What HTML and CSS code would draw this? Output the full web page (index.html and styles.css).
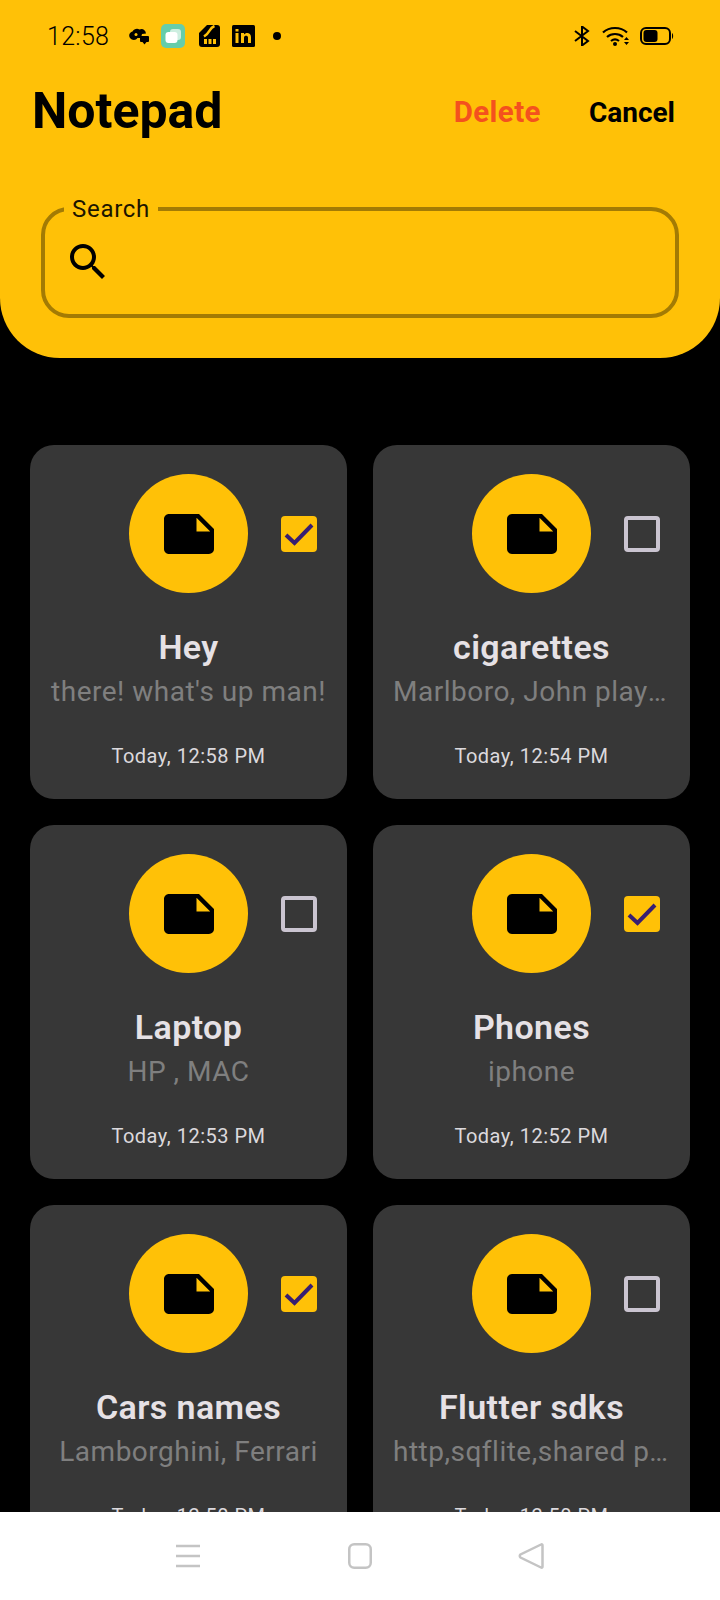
FILE: index.html
```html
<!DOCTYPE html>
<html lang="en">
<head>
    <meta charset="UTF-8">
    <title>Notepad</title>
    <link rel="stylesheet" href="styles.css">
</head>
<body>
<div class="screen">
    <header class="top">
        <div class="status">
            <span class="time">12:58</span>
            <svg class="ic-cloud" width="20" height="17" viewBox="0 0 20 17"><path d="M1 10C-1 7 1 4 3.500 3.500 5 1 8 0 10.500 1.500 13 0 16.500 1.500 17 5.500L13 6l-1 4H8.500C7 12.500 3 12.500 1 10z" fill="#000"/><rect x="11" y="8" width="9" height="6" rx="1" fill="#000"/><path d="M13.500 14h4l-2 2.500z" fill="#000"/><circle cx="7" cy="6.500" r="1.500" fill="#ffc107"/></svg>
            <svg class="ic-app" width="24" height="24" viewBox="0 0 24 24"><rect width="24" height="24" rx="5" fill="#66cdaa"/><rect x="9" y="5" width="11" height="11" rx="3" fill="#cdeee0"/><rect x="4.500" y="8" width="12" height="11" rx="3" fill="#fff"/></svg>
            <svg class="ic-sim" width="21" height="22" viewBox="0 0 21 22"><path d="M8 0h10a3 3 0 0 1 3 3v16a3 3 0 0 1-3 3H3a3 3 0 0 1-3-3V8z" fill="#000"/><path d="M15.500 1C10 3 11.500 7.500 5 11.500" fill="none" stroke="#ffc107" stroke-width="2.500"/><path d="M5 14h3v5H5zM9.500 14h3v5h-3zM14 14h3v5h-3z" fill="#ffc107"/></svg>
            <svg class="ic-in" width="23" height="22" viewBox="0 0 23 22"><rect width="23" height="22" rx="1.500" fill="#000"/><path d="M3.500 8h3v10h-3zM3.500 4h3v2.600h-3zM9 8h3v1.500c1.500-2.300 7-2.500 7 2.500v6h-3v-5.500c0-2.500-4-2.500-4 0V18H9z" fill="#ffc107"/></svg>
            <span class="dot"></span>
            <span class="spring"></span>
            <svg class="ic-bt" width="16" height="20" viewBox="0 0 16 20"><path d="M1 5l13 10-6 4.500V.5L14 5 1 15" fill="none" stroke="#000" stroke-width="2"/></svg>
            <svg class="ic-wifi" width="28" height="20" viewBox="0 0 28 20"><g fill="none" stroke="#000" stroke-width="2.200"><path d="M1 6.500c6.500-6 17.500-6 24 0"/><path d="M5 11c4.500-4 11.500-4 16 0"/><path d="M9 15c2.500-2 5.500-2 8 0"/></g><circle cx="13" cy="18" r="2" fill="#000"/><path d="M22 14l2.500-3 2.500 3zM22 16l2.500 3 2.500-3z" fill="#000"/></svg>
            <svg class="ic-batt" width="34" height="18" viewBox="0 0 34 18"><rect x="1" y="1" width="29" height="16" rx="5" fill="none" stroke="#000" stroke-width="2"/><rect x="3.500" y="3" width="14" height="12" rx="3" fill="#000"/><path d="M32 6c1.500 1 1.500 5 0 6z" fill="#000"/></svg>
        </div>
        <div class="bar">
            <h1 class="app-title">Notepad</h1>
            <span class="act delete">Delete</span>
            <span class="act cancel">Cancel</span>
        </div>
        <fieldset class="search">
            <legend>Search</legend>
            <svg width="48" height="48" viewBox="0 0 24 24"><path d="M15.500 14h-.79l-.28-.27C15.410 12.590 16 11.110 16 9.500 16 5.910 13.090 3 9.500 3S3 5.910 3 9.500 5.910 16 9.500 16c1.610 0 3.090-.59 4.230-1.570l.27.28v.79l5 4.990L20.490 19l-4.990-5zm-6 0C7.010 14 5 11.990 5 9.500S7.010 5 9.500 5 14 7.010 14 9.500 11.990 14 9.500 14z" fill="#000"/></svg>
        </fieldset>
    </header>

    <main class="notes">
        <div class="card">
            <div class="card-head">
                <div class="circle"><svg width="60" height="60" viewBox="0 0 24 24"><use href="#note"/></svg></div>
                <div class="check on"><svg width="36" height="36" viewBox="0 0 36 36"><path d="M5 19l8.500 8L31 9" fill="none" stroke="#381e72" stroke-width="4"/></svg></div>
            </div>
            <div class="name">Hey</div>
            <div class="desc">there! what's up man!</div>
            <div class="date">Today, 12:58 PM</div>
        </div>
        <div class="card">
            <div class="card-head">
                <div class="circle"><svg width="60" height="60" viewBox="0 0 24 24"><use href="#note"/></svg></div>
                <div class="check"></div>
            </div>
            <div class="name">cigarettes</div>
            <div class="desc">Marlboro, John player gold</div>
            <div class="date">Today, 12:54 PM</div>
        </div>
        <div class="card">
            <div class="card-head">
                <div class="circle"><svg width="60" height="60" viewBox="0 0 24 24"><use href="#note"/></svg></div>
                <div class="check"></div>
            </div>
            <div class="name">Laptop</div>
            <div class="desc">HP , MAC</div>
            <div class="date">Today, 12:53 PM</div>
        </div>
        <div class="card">
            <div class="card-head">
                <div class="circle"><svg width="60" height="60" viewBox="0 0 24 24"><use href="#note"/></svg></div>
                <div class="check on"><svg width="36" height="36" viewBox="0 0 36 36"><path d="M5 19l8.500 8L31 9" fill="none" stroke="#381e72" stroke-width="4"/></svg></div>
            </div>
            <div class="name">Phones</div>
            <div class="desc">iphone</div>
            <div class="date">Today, 12:52 PM</div>
        </div>
        <div class="card">
            <div class="card-head">
                <div class="circle"><svg width="60" height="60" viewBox="0 0 24 24"><use href="#note"/></svg></div>
                <div class="check on"><svg width="36" height="36" viewBox="0 0 36 36"><path d="M5 19l8.500 8L31 9" fill="none" stroke="#381e72" stroke-width="4"/></svg></div>
            </div>
            <div class="name">Cars names</div>
            <div class="desc">Lamborghini, Ferrari</div>
            <div class="date">Today, 12:50 PM</div>
        </div>
        <div class="card">
            <div class="card-head">
                <div class="circle"><svg width="60" height="60" viewBox="0 0 24 24"><use href="#note"/></svg></div>
                <div class="check"></div>
            </div>
            <div class="name">Flutter sdks</div>
            <div class="desc">http,sqflite,shared preferences</div>
            <div class="date">Today, 12:50 PM</div>
        </div>
    </main>

    <nav class="navbar">
        <svg width="26" height="24" viewBox="0 0 26 24"><path d="M1 2h24M1 12h24M1 22h24" stroke="#c4c4c4" stroke-width="2.500" fill="none"/></svg>
        <svg class="nav-home" width="24" height="26" viewBox="0 0 24 26"><rect x="1.250" y="1.250" width="21.500" height="23.500" rx="5" fill="none" stroke="#c4c4c4" stroke-width="2.500"/></svg>
        <svg class="nav-back" width="26" height="28" viewBox="0 0 26 28"><path d="M23 2.500c1 -.6 1.500 0 1.500 1v21c0 1-.5 1.600-1.500 1L2.500 15.500c-1-.8-1-2 0-3z" fill="none" stroke="#c4c4c4" stroke-width="2.500"/></svg>
    </nav>
</div>

<svg width="0" height="0" class="defs"><defs><path id="note" d="M22 10l-6-6H4c-1.100 0-2 .9-2 2v12.010c0 1.100.9 1.990 2 1.990l16-.01c1.100 0 2-.89 2-1.990v-8zm-7-4.500l5.500 5.500H15V5.500z" fill="#000"/></defs></svg>
</body>
</html>
```

FILE: styles.css
```css
*{
    padding: 0;
    margin: 0;
    box-sizing: border-box;
}
body{
    background: #000;
    font-family: Roboto, "Liberation Sans", sans-serif;
}
.screen{
    width: 720px;
    height: 1600px;
    display: flex;
    flex-direction: column;
    overflow: hidden;
}
.defs{
    position: absolute;
}

/* header */
.top{
    height: 358px;
    flex-shrink: 0;
    background: #ffc107;
    border-radius: 0 0 60px 60px;
}
.status{
    height: 48px;
    margin-top: 12px;
    padding: 0 46px 0 47px;
    display: flex;
    align-items: center;
}
.time{
    font-size: 25px;
    letter-spacing: 0.3px;
    font-weight: 300;
    color: #000;
    width: 61px;
}
.ic-cloud{
    margin-left: 21px;
}
.ic-app{
    margin-left: 12px;
}
.ic-sim{
    margin-left: 14px;
}
.ic-in{
    margin-left: 12px;
}
.dot{
    width: 8px;
    height: 8px;
    border-radius: 50%;
    background: #000;
    margin-left: 18px;
}
.spring{
    flex: 1;
}
.ic-wifi{
    margin-left: 12px;
}
.ic-batt{
    margin-left: 10px;
}
.bar{
    display: flex;
    align-items: center;
    padding: 0 45px 0 32px;
    margin-top: 22px;
}
.app-title{
    font-size: 50px;
    font-weight: 700;
    color: #000;
    flex: 1;
    line-height: 58px;
}
.act{
    font-size: 28px;
    font-weight: 700;
    margin-top: 2px;
}
.delete{
    font-size: 29.500px;
    color: #f4511e;
    letter-spacing: 0.4px;
    margin-right: 48px;
}
.cancel{
    color: #000;
}
.search{
    margin: 57px 41px 0;
    height: 121px;
    border: 4px solid #a37b04;
    border-radius: 28px;
    padding: 0 19px;
}
.search legend{
    font-size: 24px;
    letter-spacing: 0.7px;
    padding: 0 8px;
    line-height: 24px;
    color: #1c1500;
}
.search svg{
    display: block;
    margin-top: 17px;
}

/* grid of notes */
.notes{
    flex: 1;
    min-height: 0;
    overflow: hidden;
    padding: 87px 30px 0;
    display: grid;
    grid-template-columns: 317px 317px;
    grid-auto-rows: 353.5px;
    gap: 26.5px 26px;
}
.card{
    background: #373737;
    border-radius: 24px;
    padding: 29px 20px 0;
    text-align: center;
}
.card-head{
    margin: 0 -20px;
    display: grid;
    grid-template-columns: 99px 119px 1fr;
    align-items: center;
}
.circle{
    grid-column: 2;
    width: 119px;
    height: 119px;
    border-radius: 50%;
    background: #ffc107;
    display: flex;
    align-items: center;
    justify-content: center;
}
.check{
    grid-column: 3;
    justify-self: end;
    width: 36px;
    height: 36px;
    margin-right: 30px;
    border: 4px solid #cac4d0;
    border-radius: 4px;
}
.check.on{
    border: 0;
    background: #ffc107;
}
.check svg{
    display: block;
}
.name{
    margin-top: 34px;
    font-size: 34px;
    letter-spacing: 0.4px;
    line-height: 40px;
    font-weight: 600;
    color: #e6e1e5;
}
.desc{
    margin-top: 5px;
    font-size: 28px;
    line-height: 40px;
    letter-spacing: 0.5px;
    color: #7f7f7f;
    white-space: nowrap;
    overflow: hidden;
    text-overflow: ellipsis;
}
.date{
    margin-top: 32px;
    font-size: 20px;
    line-height: 24px;
    letter-spacing: 0.5px;
    color: #dcd9dd;
}

/* android nav */
.navbar{
    height: 88px;
    flex-shrink: 0;
    background: #fff;
    display: flex;
    align-items: center;
    padding-left: 175px;
}
.nav-home{
    margin-left: 147px;
}
.nav-back{
    margin-left: 146px;
}
```
